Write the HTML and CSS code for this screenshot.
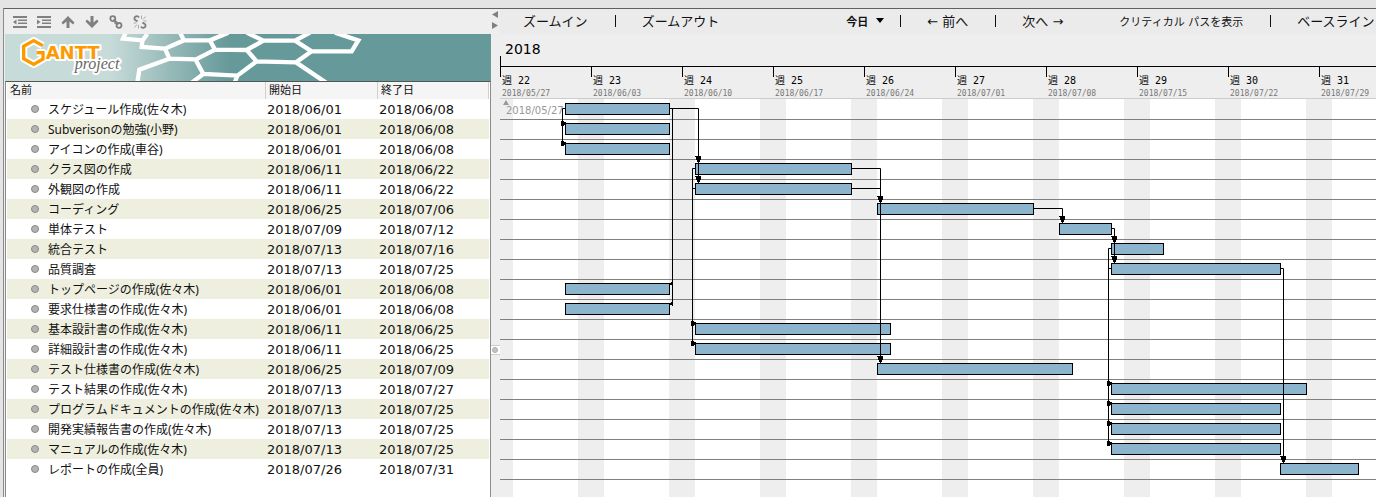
FILE: index.html
```html
<!DOCTYPE html>
<html lang="ja">
<head>
<meta charset="utf-8">
<title>GanttProject</title>
<link rel="stylesheet" href="styles.css">
</head>
<body>
<div class="window">
  <section class="tasks">
    <div class="toolbar">
      <button class="tool" aria-label="アウトデント"><svg viewBox="0 0 14 14"><path d="M0 1h14v2H0zM5 4.500h9V6H5zM5 7.500h9V9H5zM0 11h14v2H0zM3.500 4.500v5L0 7z"/></svg></button>
      <button class="tool" aria-label="インデント"><svg viewBox="0 0 14 14"><path d="M0 1h14v2H0zM5 4.500h9V6H5zM5 7.500h9V9H5zM0 11h14v2H0zM0 4.500v5L3.500 7z"/></svg></button>
      <button class="tool" aria-label="上へ"><svg viewBox="0 0 14 14"><path d="M7 1l6.500 6.500-1.500 2L8.500 6.500V13h-3V6.500L2 9.500l-1.500-2z"/></svg></button>
      <button class="tool" aria-label="下へ"><svg viewBox="0 0 14 14"><path d="M7 13l6.500-6.500-1.500-2L8.500 7.500V1h-3v6.500L2 4.500l-1.500 2z"/></svg></button>
      <button class="tool" aria-label="リンク"><svg viewBox="0 0 14 14"><g class="stroke"><circle cx="3.800" cy="3.600" r="2.500"/><circle cx="10" cy="10.300" r="2.500"/><path d="M4.500 4.500l5 5M8 6.500l-2.500 2"/></g></svg></button>
      <button class="tool" aria-label="リンク解除"><svg viewBox="0 0 14 14"><g class="stroke"><path d="M6 2.500C4.500 0 1 1.500 1.500 4c.3 1.500 2 1.500 3 2.500M8 11.500c1.500 2.500 5 1 4.500-1.500-.3-1.500-2-1.500-3-2.500"/></g><path class="thin" d="M8.500 4V.5M10 4.500l2.500-3M10.500 6h3M5.500 10v3.500M4 9.500l-2.500 3M3.500 8h-3"/></svg></button>
    </div>
    <div class="banner">
      <svg viewBox="-15 78 1458 141" preserveAspectRatio="xMinYMin slice" role="img" aria-label="GanttProject">
        <defs><linearGradient id="teal" gradientUnits="userSpaceOnUse" x1="300" y1="0" x2="660" y2="0"><stop offset="0" stop-color="#c7dbd9"/><stop offset="1" stop-color="#669999"/></linearGradient></defs>
        <rect x="-15" y="78" width="2400" height="141" fill="url(#teal)"/>
        <path class="comb" d="M347 74L339 92L398 97M412 78L397 98L395 117L465 122L522 97L510 74M522 97H600L655 74M465 122L478 152L558 154L615 125L600 98M615 125L710 126L760 98L710 74M760 98H855L900 74M855 98L905 130H1025L1045 97L975 74M905 130L858 163L740 160L710 126M740 160L682 203L580 198L556 154M580 198L545 224M682 203L674 224M858 163L948 224M478 152L388 185L382 224"/>
        <path class="mark-edge" d="M98 113L71 98L41 115V152L71 169L99 153V134H80"/>
        <text class="brand" x="107" y="153">ANTT</text>
        <path class="mark" d="M98 113L71 98L41 115V152L71 169L99 153V134H80"/>
        <text class="sub" x="194" y="184">project</text>
      </svg>
    </div>
    <table class="grid">
      <thead><tr><th>名前</th><th>開始日</th><th>終了日</th></tr></thead>
      <tbody>
        <tr><td>スケジュール作成(佐々木)</td><td>2018/06/01</td><td>2018/06/08</td></tr>
        <tr><td>Subverisonの勉強(小野)</td><td>2018/06/01</td><td>2018/06/08</td></tr>
        <tr><td>アイコンの作成(車谷)</td><td>2018/06/01</td><td>2018/06/08</td></tr>
        <tr><td>クラス図の作成</td><td>2018/06/11</td><td>2018/06/22</td></tr>
        <tr><td>外観図の作成</td><td>2018/06/11</td><td>2018/06/22</td></tr>
        <tr><td>コーディング</td><td>2018/06/25</td><td>2018/07/06</td></tr>
        <tr><td>単体テスト</td><td>2018/07/09</td><td>2018/07/12</td></tr>
        <tr><td>統合テスト</td><td>2018/07/13</td><td>2018/07/16</td></tr>
        <tr><td>品質調査</td><td>2018/07/13</td><td>2018/07/25</td></tr>
        <tr><td>トップページの作成(佐々木)</td><td>2018/06/01</td><td>2018/06/08</td></tr>
        <tr><td>要求仕様書の作成(佐々木)</td><td>2018/06/01</td><td>2018/06/08</td></tr>
        <tr><td>基本設計書の作成(佐々木)</td><td>2018/06/11</td><td>2018/06/25</td></tr>
        <tr><td>詳細設計書の作成(佐々木)</td><td>2018/06/11</td><td>2018/06/25</td></tr>
        <tr><td>テスト仕様書の作成(佐々木)</td><td>2018/06/25</td><td>2018/07/09</td></tr>
        <tr><td>テスト結果の作成(佐々木)</td><td>2018/07/13</td><td>2018/07/27</td></tr>
        <tr><td>プログラムドキュメントの作成(佐々木)</td><td>2018/07/13</td><td>2018/07/25</td></tr>
        <tr><td>開発実績報告書の作成(佐々木)</td><td>2018/07/13</td><td>2018/07/25</td></tr>
        <tr><td>マニュアルの作成(佐々木)</td><td>2018/07/13</td><td>2018/07/25</td></tr>
        <tr><td>レポートの作成(全員)</td><td>2018/07/26</td><td>2018/07/31</td></tr>
      </tbody>
    </table>
  </section>

  <div class="splitter">
    <div class="collapse">
      <button aria-label="左へ畳む"><svg viewBox="0 0 6 7"><path d="M6 0v7L0 3.500z"/></svg></button>
      <button aria-label="右へ畳む"><svg viewBox="0 0 6 7"><path d="M0 0v7l6-3.500z"/></svg></button>
    </div>
    <div class="handle"><span></span></div>
  </div>

  <section class="chart">
    <nav class="actions">
      <button>ズームイン</button><i></i><button>ズームアウト</button>
      <button class="today">今日 <svg viewBox="0 0 8 5"><path d="M0 0h8L4 5z"/></svg></button><i class="near"></i>
      <button>← 前へ</button><i></i><button>次へ →</button>
      <button class="critical">クリティカル パスを表示</button><i></i><button>ベースライン</button>
    </nav>
    <header class="timeline">
      <div class="year">2018</div>
      <ol class="weeks">
        <li><b>週 22</b><time>2018/05/27</time></li>
        <li><b>週 23</b><time>2018/06/03</time></li>
        <li><b>週 24</b><time>2018/06/10</time></li>
        <li><b>週 25</b><time>2018/06/17</time></li>
        <li><b>週 26</b><time>2018/06/24</time></li>
        <li><b>週 27</b><time>2018/07/01</time></li>
        <li><b>週 28</b><time>2018/07/08</time></li>
        <li><b>週 29</b><time>2018/07/15</time></li>
        <li><b>週 30</b><time>2018/07/22</time></li>
        <li><b>週 31</b><time>2018/07/29</time></li>
      </ol>
    </header>
    <div class="plot">
      <div class="origin"><svg viewBox="0 0 6 5"><path d="M3 0l3 5H0z"/></svg><span>2018/05/27</span></div>
      <div class="row"><div class="bar" style="--start:5;--days:8"></div></div>
      <div class="row"><div class="bar" style="--start:5;--days:8"></div></div>
      <div class="row"><div class="bar" style="--start:5;--days:8"></div></div>
      <div class="row"><div class="bar" style="--start:15;--days:12"></div></div>
      <div class="row"><div class="bar" style="--start:15;--days:12"></div></div>
      <div class="row"><div class="bar" style="--start:29;--days:12"></div></div>
      <div class="row"><div class="bar" style="--start:43;--days:4"></div></div>
      <div class="row"><div class="bar" style="--start:47;--days:4"></div></div>
      <div class="row"><div class="bar" style="--start:47;--days:13"></div></div>
      <div class="row"><div class="bar" style="--start:5;--days:8"></div></div>
      <div class="row"><div class="bar" style="--start:5;--days:8"></div></div>
      <div class="row"><div class="bar" style="--start:15;--days:15"></div></div>
      <div class="row"><div class="bar" style="--start:15;--days:15"></div></div>
      <div class="row"><div class="bar" style="--start:29;--days:15"></div></div>
      <div class="row"><div class="bar" style="--start:47;--days:15"></div></div>
      <div class="row"><div class="bar" style="--start:47;--days:13"></div></div>
      <div class="row"><div class="bar" style="--start:47;--days:13"></div></div>
      <div class="row"><div class="bar" style="--start:47;--days:13"></div></div>
      <div class="row"><div class="bar" style="--start:60;--days:6"></div></div>
      <svg class="links" width="876" height="400" viewBox="0 0 876 400" aria-hidden="true">
        <defs>
          <path id="down" d="M-3.500-7h6v4h-1v2h-3v-2h-1v-3h-1z"/>
          <path id="right" d="M-2-2h3v1h2v3h-2v1h-3z"/>
          <path id="left" d="M1-3v5h-1v-1h-3v-2h2v-1h1v-1z"/>
        </defs>
        <path class="line" d="M65 9.500H62.500V44M170 9.500H198.500V84M172.500 9.500V204M195 69.500H192.500V245M195 89.500H192.500M352 69.500H380.500V264M352 89.500H380.500M534 109.500H562.500V124M612 129.500H614.500V164M611 149.500H608.500V345M611 169.500H608.500M781 169.500H783.500V364"/>
        <use href="#right" x="63" y="24"/><use href="#right" x="63" y="44"/>
        <use href="#down" x="198.500" y="64"/><use href="#down" x="198.500" y="84"/>
        <use href="#left" x="172" y="185"/><use href="#left" x="172" y="205"/>
        <use href="#right" x="193" y="224"/><use href="#right" x="193" y="244"/>
        <use href="#down" x="380.500" y="104"/><use href="#down" x="380.500" y="264"/>
        <use href="#down" x="562.500" y="124"/>
        <use href="#down" x="614.500" y="144"/><use href="#down" x="614.500" y="164"/>
        <use href="#right" x="609" y="284"/><use href="#right" x="609" y="304"/><use href="#right" x="609" y="324"/><use href="#right" x="609" y="344"/>
        <use href="#down" x="783.500" y="364"/>
      </svg>
    </div>
  </section>
</div>
</body>
</html>
```
FILE: styles.css
```css
* { box-sizing: border-box; }

body {
  margin: 0;
  background: #e4e4e4;
  color: #111;
  font-family: "DejaVu Sans", "Noto Sans CJK JP", sans-serif;
  font-size: 13px;
}

button {
  padding: 0;
  border: 0;
  background: none;
  color: inherit;
  font: inherit;
  white-space: nowrap;
  flex: none;
}

svg { display: block; }

.window {
  display: flex;
  min-height: calc(100vh - 8px);
  margin: 8px 0 0 3px;
  border-top: 1px solid #606060;
  border-left: 1px solid #8c8c8c;
  background: #eee;
  overflow: hidden;
}

/* Task list */
.tasks {
  display: flex;
  flex-direction: column;
  flex: none;
  width: 487px;
  padding-left: 1px;
}

.toolbar {
  display: flex;
  align-items: center;
  gap: 10px;
  height: 25px;
  padding-left: 8px;
}

.tool svg { width: 14px; height: 14px; fill: #808080; }
.tool .stroke { fill: none; stroke: #808080; stroke-width: 1.8; }
.tool .thin { fill: none; stroke: #999; stroke-width: 0.8; }

.banner { height: 47px; }
.banner svg { width: 100%; height: 47px; }
.comb { fill: none; stroke: #fff; stroke-width: 13; }
.mark, .mark-edge { fill: none; stroke: #f90; stroke-width: 10; }
.mark-edge { stroke: #fff; stroke-width: 22; stroke-linejoin: round; }
.brand, .sub { stroke: #fff; stroke-width: 12; stroke-linejoin: round; paint-order: stroke; }
.brand { fill: #f90; font: bold 54px "DejaVu Sans", sans-serif; }
.sub { fill: #666; font: italic 48px "Liberation Serif", serif; }

.grid {
  display: flex;
  flex: 1;
  flex-direction: column;
  width: 486px;
  padding: 0 1px;
  border: 1px solid #8c8c8c;
  border-top-color: #555;
  border-bottom: 0;
  background: #fff;
}
.grid thead, .grid tbody { display: block; }
.grid tr { display: grid; grid-template-columns: 259px 112px 1fr; }
.grid th {
  height: 17px;
  padding-left: 3px;
  border-right: 1px solid #d0d0d0;
  background: #f5f5f5;
  font-size: 11px;
  font-weight: 400;
  line-height: 16px;
  text-align: left;
}
.grid td { height: 20px; padding: 0 0 0 1px; line-height: 21px; white-space: nowrap; }
.grid td:first-child {
  display: flex;
  align-items: center;
  gap: 9px;
  padding-left: 24px;
  font-family: "Noto Sans", "Noto Sans CJK JP", sans-serif;
  font-size: 12px;
}
.grid td:first-child::before {
  content: "";
  width: 6px;
  height: 6px;
  border: 1px solid #888;
  border-radius: 50%;
  background: #b4b4b4;
}
.grid tbody tr:nth-child(even) { background: #eeefdf; }

/* Divider between the panes */
.splitter {
  display: flex;
  flex-direction: column;
  flex: none;
  width: 9px;
}
.collapse {
  display: flex;
  flex-direction: column;
  gap: 4px;
  height: 336px;
  padding: 2px 1px;
}
.collapse svg { width: 6px; height: 7px; fill: #808080; }
.handle {
  display: flex;
  align-items: center;
  height: 10px;
  padding-left: 1px;
  border: solid #ccc;
  border-width: 1px 0;
  background: #fff;
}
.handle span { width: 6px; height: 6px; border-radius: 50%; background: #c4c4c4; border: 1px solid #aaa; }

/* Chart */
.chart {
  display: flex;
  flex-direction: column;
  flex: 1;
  min-width: 0;
  overflow: hidden;
}

.actions {
  display: flex;
  align-items: center;
  height: 25px;
  padding: 0 0 2px 23px;
  background: #ebebeb;
}
.actions i { flex: none; width: 1px; height: 12px; margin: 0 26px 0 27px; background: #111; }
.actions .near { margin-left: 16px; }
.actions .today { display: flex; align-items: center; gap: 8px; margin-left: 127px; font-size: 11px; font-weight: 700; }
.today svg { width: 8px; height: 5px; }
.actions .critical { margin-left: 56px; font-size: 11px; }

.year {
  height: 32px;
  padding-left: 5px;
  color: #000;
  font-size: 14px;
  font-weight: 400;
  line-height: 30px;
}
.weeks {
  display: flex;
  height: 33px;
  margin: 0;
  padding: 0;
  border-top: 1px solid #000;
  border-bottom: 1px solid #ccc;
  list-style: none;
}
.timeline { background: linear-gradient(#000, #000) no-repeat 0 22px / 1px 10px; }
.weeks li {
  display: flex;
  flex-direction: column;
  flex: none;
  width: 91px;
  padding: 8px 0 0 2px;
  background: linear-gradient(#000, #000) no-repeat 0 0 / 1px 10px;
  font-family: "DejaVu Sans Mono", "Noto Sans CJK JP", monospace;
}
.weeks b { font-size: 10px; font-weight: 400; line-height: 12px; color: #000; }
.weeks time { font-size: 8px; line-height: 13px; color: #777; }

.plot {
  --day: 13px;
  position: relative;
  flex: 1;
  padding-top: 1px;
  background: repeating-linear-gradient(90deg, #eee 0 13px, #fff 13px 78px, #eee 78px 91px);
}
.row { height: 20px; padding-top: 3px; border-bottom: 1px solid #808080; }
.bar {
  width: calc(var(--days) * var(--day) + 1px);
  height: 12px;
  margin-left: calc(var(--start) * var(--day));
  border: 1px solid #000;
  background: #8cb4cd;
}
.origin {
  position: absolute;
  top: 1px;
  left: 3px;
  color: #999;
  font-size: 10px;
  line-height: 12px;
}
.origin svg { width: 6px; height: 5px; fill: #999; }
.origin span { display: block; padding-left: 3px; }
.links { position: absolute; top: 0; left: 0; }
.links .line { fill: none; stroke: #000; stroke-width: 1; }
```
